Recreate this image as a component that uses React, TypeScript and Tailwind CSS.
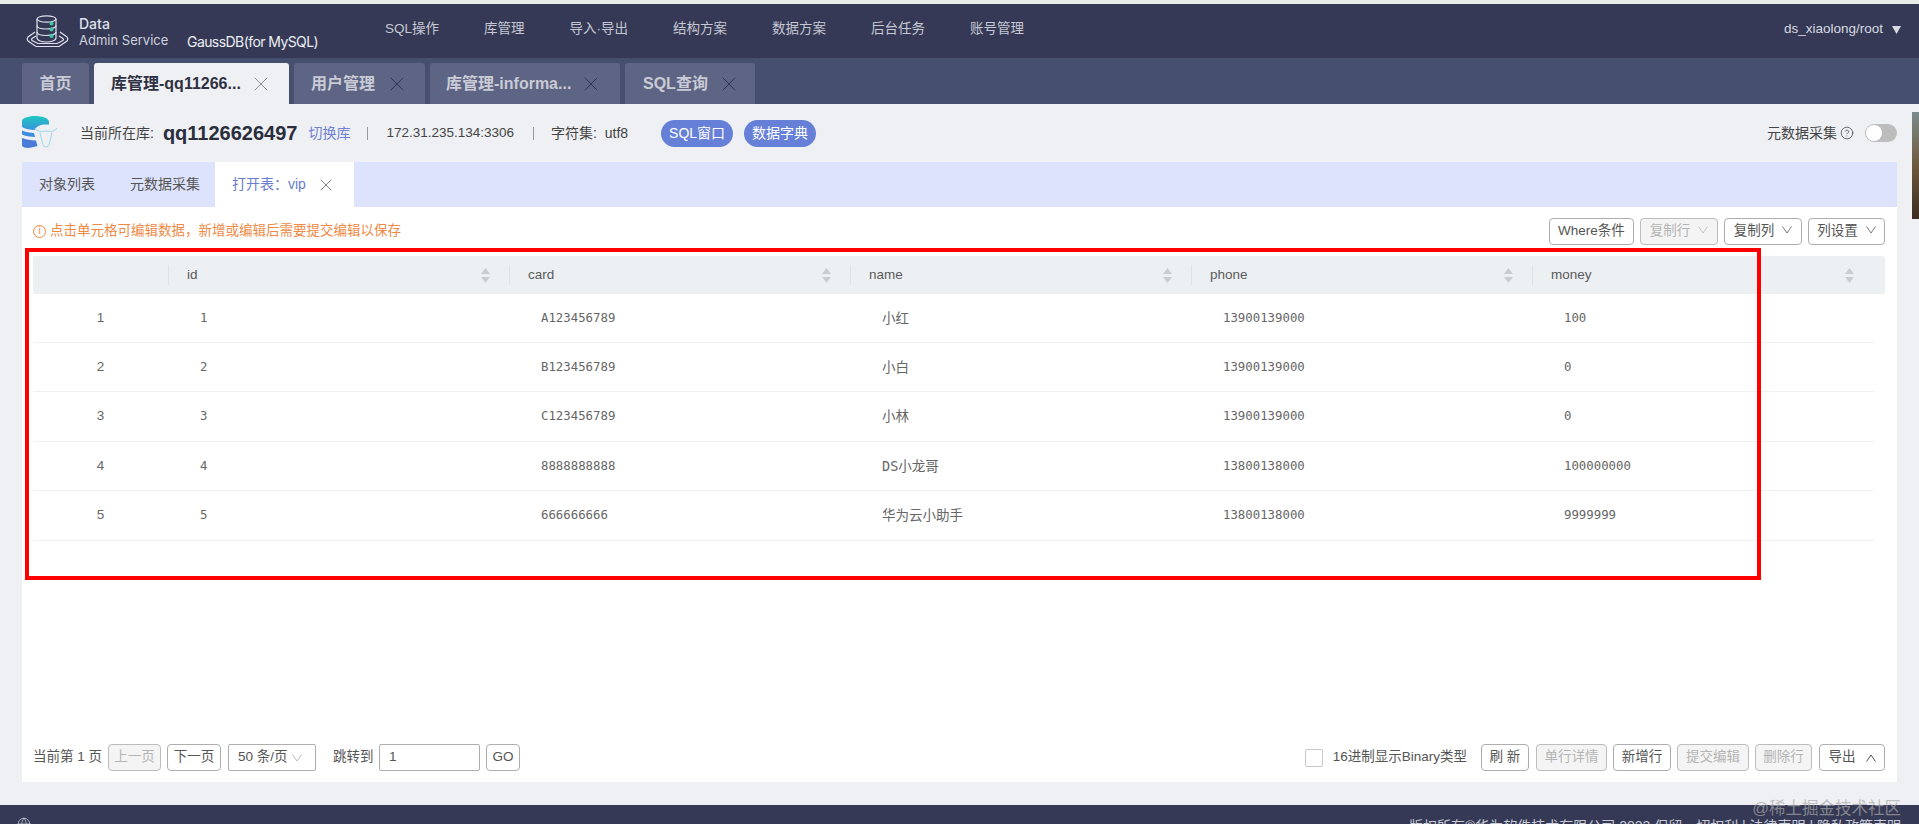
import { CircleHelp, Globe, X } from "lucide-react";

const sans = "font-['Liberation_Sans','Noto_Sans_CJK_SC',sans-serif]";

function Vee({ className = "" }: { className?: string }) {
  return (
    <svg width="10" height="8" viewBox="0 0 10 8" fill="none" stroke="currentColor" strokeWidth="1" className={className}>
      <polyline points="0.5,0.5 5,7 9.5,0.5" />
    </svg>
  );
}

function Sort() {
  return (
    <svg width="9" height="15" viewBox="0 0 9 15" fill="#c9cdd2" className="shrink-0">
      <polygon points="4.5,0 9,6 0,6" />
      <polygon points="4.5,15 9,9 0,9" />
    </svg>
  );
}

function DataLogo() {
  return (
    <svg width="43" height="33" viewBox="0 0 43 33" fill="none" stroke="#dfe2ec" strokeWidth="1.2" className="shrink-0">
      <path d="M9 17 L2 22 Q0.5 24 2 26 L10 31.5 H33 L41 26 Q42.5 24 41 22 L34 17" />
      <path d="M10 21 L6 23.5 Q5 24.5 6 25.5 L12 28.5 H31 L37 25.5 Q38 24.5 37 23.5 L33 21" />
      <ellipse cx="20.5" cy="4" rx="9.5" ry="3.2" />
      <path d="M11 4 V23 C11 25.5 16 27 20.5 27 C25 27 30 25.5 30 23 V4" />
      <path d="M11 10.5 C11 13 16 14 20.5 14 C25 14 30 13 30 10.5" />
      <path d="M11 17 C11 19.5 16 20.5 20.5 20.5 C25 20.5 30 19.5 30 17" />
      <circle cx="25.5" cy="8.5" r="2" fill="#3fc9ac" stroke="none" />
      <circle cx="25.5" cy="14.5" r="2" fill="#3fc9ac" stroke="none" />
      <circle cx="25.5" cy="21" r="2" fill="#3fc9ac" stroke="none" />
    </svg>
  );
}

function DbLogo() {
  return (
    <svg width="36" height="34" viewBox="0 0 36 34" fill="none" className="shrink-0">
      <defs>
        <linearGradient id="dbg" x1="0" y1="0" x2="0" y2="1">
          <stop offset="0" stopColor="#1fc7c0" />
          <stop offset="1" stopColor="#3a93dd" />
        </linearGradient>
      </defs>
      <path d="M0 5 C0 1.5 8 0 13 0 C20 0 27 2 27 6 V8.5 C19 8 14 10 13 14 C8 14 3 13 0 11 Z" fill="url(#dbg)" />
      <path d="M0 14.5 C3 16 8 17 12 17 L13 21 C8 21 3 20 0 18.5 Z" fill="#3f8ddd" />
      <path d="M0 22 C4 23.5 9 24.5 14 24.5 L15.5 30 C9 32 3 33 0 30 Z" fill="#4a7bd8" />
      <path d="M13 12 C15 16 19 16 24 15 C28 16 32 16 35 12" stroke="#a8d9e6" strokeWidth="1.1" />
      <path d="M18 16.5 L21 29 Q24 33 27 29 L30 16.5" stroke="#a8d9e6" strokeWidth="1.1" />
    </svg>
  );
}

const navItems = ["SQL操作", "库管理", "导入·导出", "结构方案", "数据方案", "后台任务", "账号管理"];

const tabs = [
  { label: "库管理-qq11266...", w: "w-[195px]", pl: "pl-[17px]", gap: "ml-[8px]", active: true },
  { label: "用户管理", w: "w-[131px]", pl: "pl-[17px]", gap: "ml-[10px]", active: false },
  { label: "库管理-informa...", w: "w-[190px]", pl: "pl-[16px]", gap: "ml-[8px]", active: false },
  { label: "SQL查询", w: "w-[130px]", pl: "pl-[18px]", gap: "ml-[9px]", active: false },
];

const columns = ["id", "card", "name", "phone", "money"];

const rows = [
  ["1", "A123456789", "小红", "13900139000", "100"],
  ["2", "B123456789", "小白", "13900139000", "0"],
  ["3", "C123456789", "小林", "13900139000", "0"],
  ["4", "8888888888", "DS小龙哥", "13800138000", "100000000"],
  ["5", "666666666", "华为云小助手", "13800138000", "9999999"],
];

function Btn({ label, w, disabled, children }: { label: string; w: string; disabled?: boolean; children?: React.ReactNode }) {
  return (
    <div
      className={`${w} h-[27px] shrink-0 flex items-center justify-center rounded-[4px] border text-[13.5px] ${
        disabled ? "border-[#bcbcbc] bg-[#f4f4f4] text-[#b4b4b4]" : "border-[#aeaeae] bg-white text-[#555]"
      }`}
    >
      <span>{label}</span>
      {children}
    </div>
  );
}

export default function App() {
  return (
    <div className={`relative h-screen w-full overflow-hidden flex flex-col bg-[#eef0f4] ${sans}`}>
      <div className="h-[4px] shrink-0 bg-[#e6ece6]" />

      {/* top header */}
      <header className="h-[54px] shrink-0 bg-[#353955] flex items-center pl-[26px] pr-[18px] text-[#d3d5df]">
        <DataLogo />
        <div className="ml-[10px] w-[108px] shrink-0 mt-[2px] font-['Inter','Liberation_Sans',sans-serif]">
          <div className="text-[14px] leading-[16px] font-medium text-[#dfe1ea]">Data</div>
          <div className="text-[13px] leading-[16px] text-[#cfd2de]">Admin Service</div>
        </div>
        <div className="w-[198px] shrink-0 self-end mb-[8px] text-[14px] leading-[16px] text-[#eceef4] font-['Inter','Liberation_Sans',sans-serif] tracking-[-0.57px]">
          GaussDB(for MySQL)
        </div>
        <nav className="flex gap-[45px] text-[13.5px] text-[#c6c8d4] mb-[3px]">
          {navItems.map((n) => (
            <span key={n}>{n}</span>
          ))}
        </nav>
        <div className="ml-auto flex items-center gap-[9px] text-[13.5px] text-[#d8dae3] mb-[3px]">
          <span>ds_xiaolong/root</span>
          <svg width="9" height="8" viewBox="0 0 9 8" fill="#d8dae3">
            <polygon points="0,0 9,0 4.5,8" />
          </svg>
        </div>
      </header>

      {/* tab bar */}
      <div className="h-[46px] shrink-0 bg-[#474f6f] flex items-end pl-[22px] gap-[5px]">
        <div className="w-[67px] h-[41px] rounded-t-[3px] bg-[#5e6483] flex items-center justify-center text-[16px] font-bold text-[#c9cbd6]">
          首页
        </div>
        {tabs.map((t) => (
          <div
            key={t.label}
            className={`${t.w} ${t.pl} h-[41px] rounded-t-[3px] flex items-center text-[16px] font-bold ${
              t.active ? "bg-[#eef0f4] text-[#2f3142]" : "bg-[#5e6483] text-[#c9cbd6]"
            }`}
          >
            <span className="whitespace-nowrap">{t.label}</span>
            <X size={24} strokeWidth={1} className={`${t.gap} shrink-0 ${t.active ? "text-[#8a8c94]" : "text-[#30354f]"}`} />
          </div>
        ))}
      </div>

      {/* main */}
      <main className="flex-1 min-h-0 flex flex-col px-[22px]">
        <div className="h-[58px] shrink-0 flex items-center text-[14px] text-[#444]">
          <DbLogo />
          <span className="ml-[22px] whitespace-nowrap">当前所在库:</span>
          <span className="ml-[9px] text-[20px] font-bold text-[#2a2d3a]">qq1126626497</span>
          <span className="ml-[11px] text-[#6f82d2]">切换库</span>
          <span className="ml-[17px] w-px h-[13px] bg-[#9a9a9a]" />
          <span className="ml-[18px] text-[13.5px]">172.31.235.134:3306</span>
          <span className="ml-[19px] w-px h-[13px] bg-[#9a9a9a]" />
          <span className="ml-[17px] whitespace-nowrap">字符集:&nbsp;&nbsp;utf8</span>
          <span className="ml-[33px] w-[72px] h-[27px] rounded-full bg-[#6680d8] text-white flex items-center justify-center">SQL窗口</span>
          <span className="ml-[11px] w-[72px] h-[27px] rounded-full bg-[#6680d8] text-white flex items-center justify-center">数据字典</span>
          <span className="ml-auto">元数据采集</span>
          <CircleHelp size={14} strokeWidth={1.3} className="ml-[3px] text-[#444]" />
          <span className="ml-[11px] w-[32px] h-[18px] rounded-full bg-[#bdbdbd] flex items-center pl-[1px]">
            <span className="w-[16px] h-[16px] rounded-full bg-white" />
          </span>
        </div>

        <section className="h-[620px] shrink-0 bg-white flex flex-col">
          {/* sub tabs */}
          <div className="h-[45px] shrink-0 bg-[#dde3fc] flex items-center text-[14px] text-[#555]">
            <span className="ml-[17px] whitespace-nowrap">对象列表</span>
            <span className="ml-[35px] whitespace-nowrap">元数据采集</span>
            <div className="ml-[15px] w-[139px] h-[45px] bg-white flex items-center pl-[17px] text-[#6a7dc9]">
              <span className="whitespace-nowrap">打开表：vip</span>
              <X size={20} strokeWidth={1.1} className="ml-[10px] shrink-0 text-[#777]" />
            </div>
          </div>

          {/* toolbar */}
          <div className="h-[49px] shrink-0 flex items-start pl-[11px] pr-[12px]">
            <div className="mt-[16px] flex items-center text-[13.5px] text-[#ee8a45] leading-[16px]">
              <span className="w-[13px] h-[13px] rounded-full border border-[#ee8a45] flex items-center justify-center text-[10px] leading-none">i</span>
              <span className="ml-[4px]">点击单元格可编辑数据，新增或编辑后需要提交编辑以保存</span>
            </div>
            <div className="ml-auto mt-[11px] flex gap-[6px]">
              <Btn label="Where条件" w="w-[85px]" />
              <Btn label="复制行" w="w-[78px]" disabled>
                <Vee className="ml-[8px] mb-[3px] text-[#c4c4c4]" />
              </Btn>
              <Btn label="复制列" w="w-[78px]">
                <Vee className="ml-[8px] mb-[3px] text-[#777]" />
              </Btn>
              <Btn label="列设置" w="w-[77px]">
                <Vee className="ml-[8px] mb-[3px] text-[#777]" />
              </Btn>
            </div>
          </div>

          {/* table */}
          <div className="mx-[11px] mr-[12px] shrink-0">
            <div className="h-[38px] rounded-[2px] bg-[#edf0f3] grid grid-cols-[135px_341px_341px_341px_341px_1fr] items-center text-[13.5px] text-[#5a5a5a]">
              <div />
              {columns.map((c) => (
                <div key={c} className="flex items-center h-[20px] border-l border-[#dfe2e6] pl-[18px]">
                  <span>{c}</span>
                  <span className={`ml-auto ${c === "money" ? "mr-[31px]" : "mr-[19px]"}`}>
                    <Sort />
                  </span>
                </div>
              ))}
            </div>
            <div className="mr-[11px] text-[#666]">
              {rows.map((r, i) => (
                <div
                  key={r[0]}
                  className="h-[49.4px] first:h-[49px] border-b border-[#eef0f2] grid grid-cols-[135px_341px_341px_341px_341px_1fr] items-center font-['DejaVu_Sans_Mono','Noto_Sans_CJK_SC',monospace] text-[12.35px]"
                >
                  <div className={`text-center text-[13.5px] ${sans}`}>{i + 1}</div>
                  {r.map((v, j) => (
                    <div key={j} className={`pl-[32px] whitespace-nowrap ${j === 2 ? "text-[13.5px]" : ""}`}>
                      {v}
                    </div>
                  ))}
                </div>
              ))}
            </div>
          </div>

          {/* pagination */}
          <div className="mt-auto mb-[11px] flex items-center pl-[11px] pr-[12px] text-[13.5px] text-[#555]">
            <span className="w-[68px] whitespace-nowrap">当前第 1 页</span>
            <div className="ml-[7px]"><Btn label="上一页" w="w-[53px]" disabled /></div>
            <div className="ml-[6px]"><Btn label="下一页" w="w-[54px]" /></div>
            <div className="ml-[7px] w-[88px] h-[27px] rounded-[2px] border border-[#aeaeae] flex items-center pl-[9px]">
              <span className="whitespace-nowrap">50 条/页</span>
              <Vee className="ml-[4px] text-[#bbb]" />
            </div>
            <span className="ml-[17px] w-[40px] whitespace-nowrap">跳转到</span>
            <div className="ml-[6px] w-[101px] h-[27px] rounded-[2px] border border-[#aeaeae] flex items-center pl-[9px]">1</div>
            <div className="ml-[6px]"><Btn label="GO" w="w-[34px]" /></div>

            <span className="ml-auto w-[18px] h-[18px] rounded-[2px] border border-[#c8c8c8] bg-white" />
            <span className="ml-[10px] whitespace-nowrap">16进制显示Binary类型</span>
            <div className="ml-[14px]"><Btn label="刷 新" w="w-[48px]" /></div>
            <div className="ml-[7px]"><Btn label="单行详情" w="w-[71px]" disabled /></div>
            <div className="ml-[6px]"><Btn label="新增行" w="w-[58px]" /></div>
            <div className="ml-[6px]"><Btn label="提交编辑" w="w-[72px]" disabled /></div>
            <div className="ml-[6px]"><Btn label="删除行" w="w-[57px]" disabled /></div>
            <div className="ml-[7px]">
              <Btn label="导出" w="w-[66px]">
                <Vee className="ml-[10px] rotate-180 text-[#555]" />
              </Btn>
            </div>
          </div>
        </section>
      </main>

      {/* footer */}
      <footer className="h-[19px] shrink-0 bg-[#353955] flex items-start pl-[17px] pr-[18px] text-[14px] text-[#c9cbd6] overflow-hidden">
        <Globe size={14} strokeWidth={1.2} className="mt-[12px] text-[#d6d8e2]" />
        <span className="ml-auto mt-[11px] whitespace-nowrap">版权所有©华为软件技术有限公司 2023.保留一切权利 | 法律声明 | 隐私政策声明</span>
      </footer>

      {/* annotation rectangle */}
      <div className="absolute left-[25px] top-[248px] w-[1736px] h-[332px] border-4 border-[#ff0000] pointer-events-none" />
      {/* neighbouring window sliver */}
      <div className="absolute left-[1912px] top-[112px] w-[7px] h-[107px] bg-gradient-to-b from-[#7b8b8c] via-[#6d5a3f] to-[#3b2d20]" />
      {/* watermark */}
      <div className="absolute right-[18px] top-[798px] text-[16.5px] leading-[20px] text-[#a8a8a8]/70 whitespace-nowrap">@稀土掘金技术社区</div>
    </div>
  );
}
